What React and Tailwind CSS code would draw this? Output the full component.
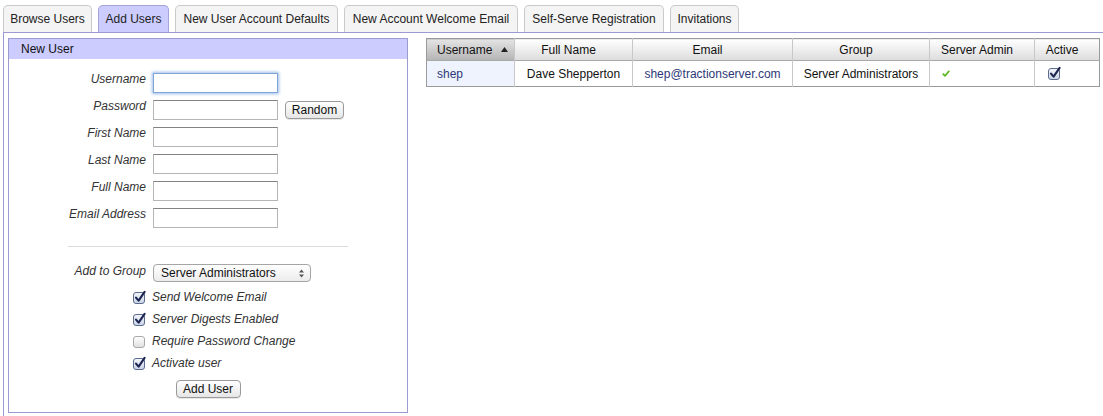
import React from "react";

const tabs = [
  { label: "Browse Users", w: "w-[89px]" },
  { label: "Add Users", w: "w-[71px]", active: true },
  { label: "New User Account Defaults", w: "w-[163px]" },
  { label: "New Account Welcome Email", w: "w-[174px]" },
  { label: "Self-Serve Registration", w: "w-[140px]" },
  { label: "Invitations", w: "w-[69px]" },
];

const fields = ["Username", "Password", "First Name", "Last Name", "Full Name", "Email Address"];

function Box({ checked }) {
  return (
    <svg width="15" height="15" viewBox="0 0 15 15" className="shrink-0">
      <defs>
        <linearGradient id="cbg" x1="0" y1="0" x2="0" y2="1">
          <stop offset="0" stopColor="#f4f6fb" />
          <stop offset="1" stopColor="#c9d3e6" />
        </linearGradient>
        <linearGradient id="cbo" x1="0" y1="0" x2="0" y2="1">
          <stop offset="0" stopColor="#ffffff" />
          <stop offset="1" stopColor="#dedede" />
        </linearGradient>
      </defs>
      <rect x="1.5" y="2.5" width="11" height="11" rx="2.5"
        fill={checked ? "url(#cbg)" : "url(#cbo)"} stroke={checked ? "#5d6c8c" : "#a9a9a9"} />
      {checked && (
        <path d="M4 7.6 L6.6 10.6 L12.6 1.8" stroke="#1c2550" strokeWidth="2.1"
          fill="none" strokeLinecap="round" strokeLinejoin="round" />
      )}
    </svg>
  );
}

function Btn({ children, className }) {
  return (
    <div className={"h-[18px] flex items-center justify-center rounded-[4px] border border-[#9a9a9a] bg-gradient-to-b from-white to-[#e6e6e6] text-[12px] text-[#111] shadow-[0_1px_0_#e8e8e8] " + className}>
      {children}
    </div>
  );
}

function NewUserPanel() {
  return (
    <div className="w-[400px] border border-[#9b9bd2] shrink-0">
      <div className="h-[20px] bg-[#ccccff] pl-[12px] flex items-center text-[12px] text-[#111]">New User</div>
      <div className="pt-[14px] pb-[14px]">
        <div className="flex flex-col gap-[7px]">
          {fields.map((f, i) => (
            <div key={f} className="flex items-start">
              <div className="w-[137px] text-right italic text-[12px] leading-[14px] text-[#333] -mt-[1px]">{f}</div>
              <div
                className={
                  "ml-[7px] w-[125px] h-[20px] bg-white border " +
                  (i === 0
                    ? "border-[#7fa5d9] shadow-[0_0_3px_1px_#9dbde8]"
                    : "border-[#b5b5b5] border-t-[#838383]")
                }
              />
              {f === "Password" && <Btn className="ml-[7px] mt-[1px] w-[59px]">Random</Btn>}
            </div>
          ))}
        </div>
        <div className="mt-[18px] ml-[59px] w-[280px] h-px bg-[#dcdcdc]" />
        <div className="mt-[17px] flex items-start">
          <div className="w-[137px] text-right italic text-[12px] leading-[14px] text-[#333]">Add to Group</div>
          <div className="ml-[7px] w-[158px] h-[18px] rounded-[4px] border border-[#a5a5a5] bg-gradient-to-b from-white to-[#ececec] flex items-center pl-[7px] pr-[6px] text-[12px] text-[#111]">
            <span className="flex-1">Server Administrators</span>
            <svg width="5" height="9" viewBox="0 0 5 9">
              <path d="M0 3.5 L2.5 0.5 L5 3.5 Z M0 5.5 L2.5 8.5 L5 5.5 Z" fill="#555" />
            </svg>
          </div>
        </div>
        <div className="mt-[4px] ml-[123px]">
          {[
            ["Send Welcome Email", true],
            ["Server Digests Enabled", true],
            ["Require Password Change", false],
            ["Activate user", true],
          ].map(([t, c]) => (
            <div key={t} className="h-[22px] flex items-center gap-[5px]">
              <Box checked={c} />
              <span className="italic text-[12px] text-[#333]">{t}</span>
            </div>
          ))}
        </div>
        <div className="mt-[6px] flex justify-center">
          <Btn className="w-[65px]">Add User</Btn>
        </div>
      </div>
    </div>
  );
}

function UsersTable() {
  const th = "h-[22px] border-l border-[#c8c8c8] bg-gradient-to-b from-white to-[#dcdcdc] font-normal text-[12px] text-[#111] text-center pr-[10px]";
  const td = "h-[26px] border-l border-[#c8c8c8] text-[12px]";
  return (
    <table className="ml-[18px] w-[673px] border-collapse border border-[#9a9a9a] table-fixed self-start">
      <colgroup>
        <col className="w-[88px]" />
        <col className="w-[118px]" />
        <col className="w-[160px]" />
        <col className="w-[137px]" />
        <col className="w-[105px]" />
        <col className="w-[65px]" />
      </colgroup>
      <thead>
        <tr className="border-b border-[#a8a8a8]">
          <th className="h-[22px] bg-gradient-to-b from-[#e4e4e4] to-[#b4b4b4] font-normal text-[12px] text-[#111] text-left pl-[10px]">
            <div className="flex items-center">
              <span>Username</span>
              <svg width="7" height="5" viewBox="0 0 7 5" className="ml-[9px]">
                <path d="M0 5 L3.5 0 L7 5 Z" fill="#222" />
              </svg>
            </div>
          </th>
          <th className={th}>Full Name</th>
          <th className={th}>Email</th>
          <th className={th}>Group</th>
          <th className={th}>Server Admin</th>
          <th className={th}>Active</th>
        </tr>
      </thead>
      <tbody>
        <tr>
          <td className="h-[26px] bg-[#eef3fe] pl-[10px] text-[12px] text-left text-[#2e3878]">shep</td>
          <td className={td + " text-center text-[#111]"}>Dave Shepperton</td>
          <td className={td + " text-center text-[#2e3878]"}>shep@tractionserver.com</td>
          <td className={td + " text-center text-[#111]"}>Server Administrators</td>
          <td className={td + " text-left pl-[12px]"}>
            <svg width="8" height="7" viewBox="0 0 8 7">
              <path d="M0.8 3.6 L3 5.9 L7.3 0.8" stroke="#5fb61f" strokeWidth="1.7" fill="none" strokeLinejoin="round" />
            </svg>
          </td>
          <td className={td + " text-left pl-[12px]"}>
            <Box checked />
          </td>
        </tr>
      </tbody>
    </table>
  );
}

export default function App() {
  return (
    <div className="w-[1103px] h-[416px] overflow-hidden bg-white flex flex-col font-['Liberation_Sans',Arial,sans-serif] text-[#111]">
      <div className="flex pl-[3px] pt-[5px] gap-[6px]">
        {tabs.map((t) => (
          <div
            key={t.label}
            className={
              "h-[27px] flex items-center justify-center rounded-t-[5px] border border-b-0 text-[12px] text-[#222] " +
              t.w +
              (t.active ? " bg-[#ccccff] border-[#a3a3d6]" : " bg-[#f4f4f4] border-[#cacaca]")
            }
          >
            {t.label}
          </div>
        ))}
      </div>
      <div className="ml-[3px] flex-1 border-l border-t border-[#9b9bd2] pl-[4px] pt-[5px] flex items-start">
        <NewUserPanel />
        <UsersTable />
      </div>
    </div>
  );
}
